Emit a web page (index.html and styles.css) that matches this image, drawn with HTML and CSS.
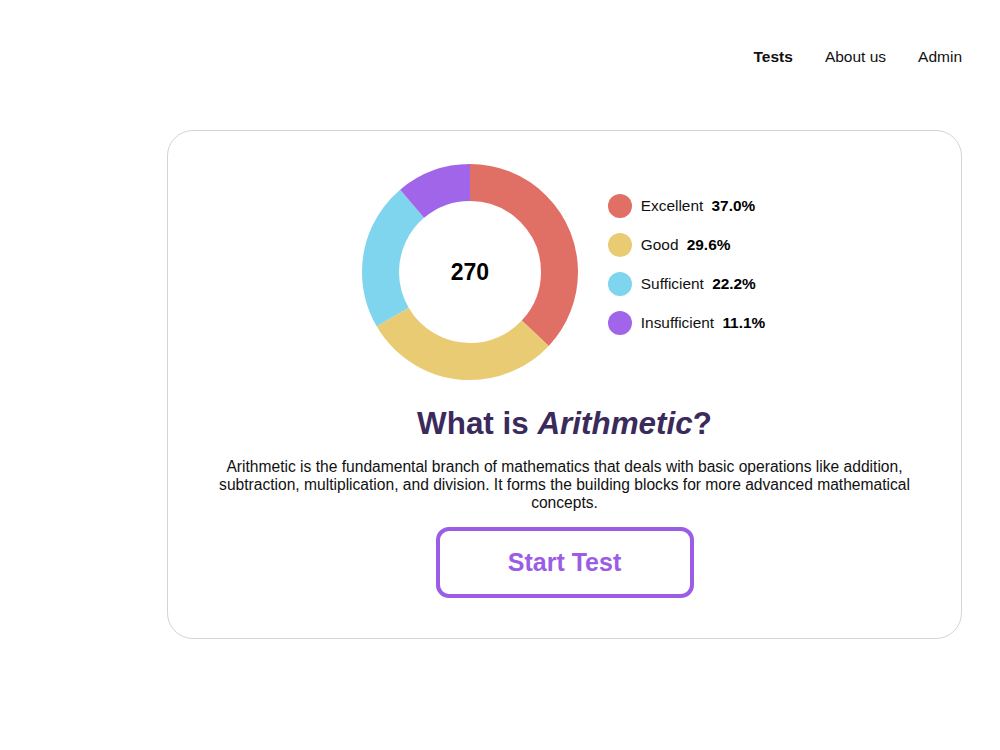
FILE: index.html
```html
<!DOCTYPE html>
<html lang="en">
<head>
<meta charset="utf-8">
<title>Arithmetic</title>
<link rel="stylesheet" href="styles.css">
</head>
<body>
<header class="topbar">
  <nav class="nav">
    <a class="nav-link active" href="#">Tests</a>
    <a class="nav-link" href="#">About us</a>
    <a class="nav-link" href="#">Admin</a>
  </nav>
</header>
<main class="card">
  <section class="stats">
    <div class="donut">
      <svg width="216" height="216" viewBox="0 0 216 216">
        <g transform="rotate(-90 108 108)" fill="none" stroke-width="37">
          <circle cx="108" cy="108" r="89.5" pathLength="100" stroke="#e07065" stroke-dasharray="37 63" stroke-dashoffset="0"/>
          <circle cx="108" cy="108" r="89.5" pathLength="100" stroke="#e9cb74" stroke-dasharray="29.6 70.4" stroke-dashoffset="-37"/>
          <circle cx="108" cy="108" r="89.5" pathLength="100" stroke="#7fd5ee" stroke-dasharray="22.2 77.8" stroke-dashoffset="-66.6"/>
          <circle cx="108" cy="108" r="89.5" pathLength="100" stroke="#a065e9" stroke-dasharray="11.2 88.8" stroke-dashoffset="-88.8"/>
        </g>
      </svg>
      <span class="donut-total">270</span>
    </div>
    <ul class="legend">
      <li class="legend-item"><span class="dot dot-excellent"></span>Excellent <b>37.0%</b></li>
      <li class="legend-item"><span class="dot dot-good"></span>Good <b>29.6%</b></li>
      <li class="legend-item"><span class="dot dot-sufficient"></span>Sufficient <b>22.2%</b></li>
      <li class="legend-item"><span class="dot dot-insufficient"></span>Insufficient <b>11.1%</b></li>
    </ul>
  </section>
  <h1 class="title">What is <em>Arithmetic</em>?</h1>
  <p class="desc">Arithmetic is the fundamental branch of mathematics that deals with basic operations like addition, subtraction, multiplication, and division. It forms the building blocks for more advanced mathematical concepts.</p>
  <button class="start-btn" type="button">Start Test</button>
</main>
</body>
</html>
```

FILE: styles.css
```css
* { box-sizing: border-box; }

html, body {
  margin: 0;
  padding: 0;
  background: #ffffff;
}

body {
  font-family: "Liberation Sans", Arial, sans-serif;
  color: #000;
  padding: 0 38px 0 167px;
}

.topbar {
  display: flex;
  justify-content: flex-end;
  padding-top: 47px;
  height: 130px;
}

.nav {
  display: flex;
  gap: 32px;
  height: 18px;
}

.nav-link {
  font-size: 15.5px;
  line-height: 20px;
  color: #111;
  text-decoration: none;
}

.nav-link.active {
  font-weight: bold;
}

.card {
  width: 795px;
  border: 1px solid #d4d4d4;
  border-radius: 26px;
  padding: 33px 10px 40px;
  display: flex;
  flex-direction: column;
  align-items: center;
}

.stats {
  display: flex;
  align-items: center;
  gap: 30px;
  margin-left: -2px;
}

.donut {
  position: relative;
  width: 216px;
  height: 216px;
}

.donut svg { display: block; }

.donut-total {
  position: absolute;
  inset: 0;
  display: flex;
  align-items: center;
  justify-content: center;
  font-size: 23px;
  font-weight: bold;
  color: #000;
}

.legend {
  list-style: none;
  margin: 0;
  padding: 0 0 16px;
  display: flex;
  flex-direction: column;
  gap: 15px;
}

.legend-item {
  display: flex;
  align-items: center;
  font-size: 15.4px;
  line-height: 24px;
  color: #111;
  white-space: pre;
}

.legend-item b {
  margin-left: 4px;
  color: #000;
}

.dot {
  width: 24px;
  height: 24px;
  border-radius: 50%;
  margin-right: 9px;
  flex: none;
}

.dot-excellent { background: #e07065; }
.dot-good { background: #e9cb74; }
.dot-sufficient { background: #7fd5ee; }
.dot-insufficient { background: #a065e9; }

.title {
  margin: 26px 0 0;
  font-size: 31.4px;
  line-height: 36px;
  font-weight: bold;
  color: #3b2a5c;
}

.title em { font-style: italic; }

.desc {
  margin: 16px 0 0;
  max-width: 720px;
  font-size: 15.6px;
  line-height: 18px;
  text-align: center;
  color: #111;
}

.start-btn {
  margin-top: 15px;
  width: 258px;
  height: 71px;
  border: 4px solid #9b5de5;
  border-radius: 13px;
  background: #fff;
  color: #9b5de5;
  font-family: "Liberation Sans", Arial, sans-serif;
  font-size: 25px;
  font-weight: bold;
  cursor: pointer;
}
```
